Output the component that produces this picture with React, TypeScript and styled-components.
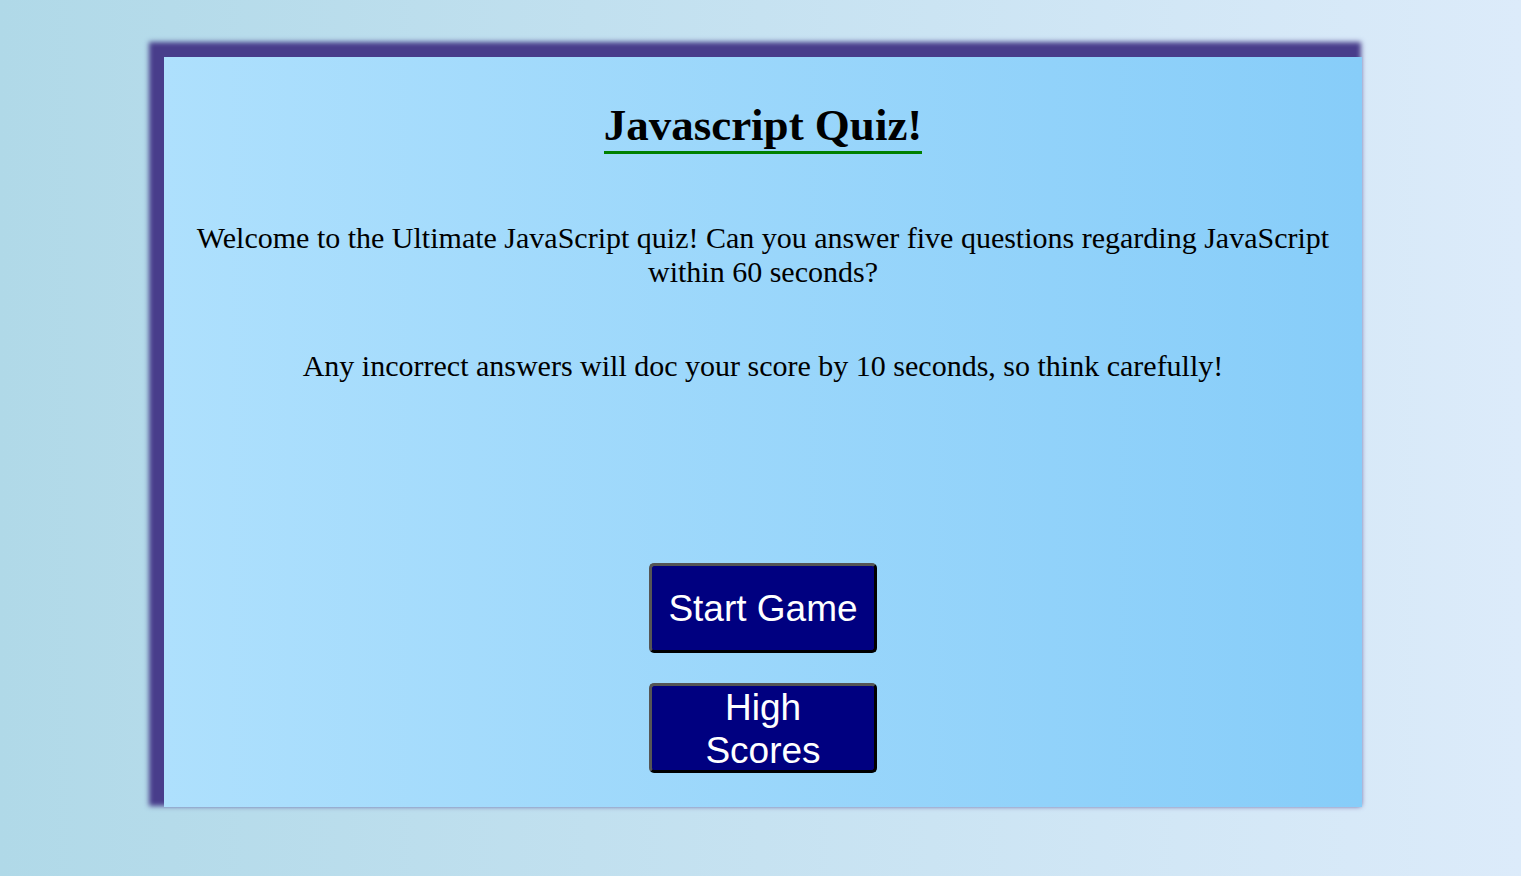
import styled, { createGlobalStyle } from 'styled-components';

const GlobalStyle = createGlobalStyle`
	html, body {
		margin: 0;
		padding: 0;
	}
	body {
		font-family: 'Liberation Serif', 'Times New Roman', serif;
	}
`;

const App = () => {
	return (
		<Page>
			<GlobalStyle />
			<Card>
				<Title>
					<TitleText>Javascript Quiz!</TitleText>
				</Title>
				<Intro>
					Welcome to the Ultimate JavaScript quiz! Can you answer five questions regarding JavaScript within 60
					seconds?
				</Intro>
				<Warning>Any incorrect answers will doc your score by 10 seconds, so think carefully!</Warning>
				<Buttons>
					<QuizButton>Start Game</QuizButton>
					<QuizButton>High Scores</QuizButton>
				</Buttons>
			</Card>
		</Page>
	);
};

export default App;

const Page = styled.div`
	min-height: 876px;
	box-sizing: border-box;
	padding: 57px 0 0 164px;
	background: linear-gradient(to right, #b0d9e8, #dcebfa);
	overflow: hidden;
`;

const Card = styled.div`
	width: 1198px;
	height: 750px;
	box-sizing: border-box;
	padding: 42px 30px 0;
	display: flex;
	flex-direction: column;
	align-items: center;
	background: linear-gradient(to right, #aee0fd, #87cdf9);
	box-shadow: -8px -8px 5px 7px #483d8b;
`;

const Title = styled.h1`
	margin: 0;
	font-size: 45px;
	font-weight: bold;
	line-height: normal;
	text-align: center;
`;

const TitleText = styled.span`
	display: inline-block;
	border-bottom: 3px solid #008000;
	color: #000;
`;

const Text = styled.p`
	margin: 0;
	font-size: 30px;
	line-height: 34px;
	text-align: center;
	color: #000;
`;

const Intro = styled(Text)`
	margin-top: 67px;
`;

const Warning = styled(Text)`
	margin-top: 60px;
`;

const Buttons = styled.div`
	margin-top: 180px;
	display: flex;
	flex-direction: column;
	align-items: center;
	gap: 30px;
`;

const QuizButton = styled.button`
	width: 228px;
	height: 90px;
	padding: 0 15px;
	box-sizing: border-box;
	background: #000080;
	color: #fff;
	font-family: 'Liberation Sans', Arial, sans-serif;
	font-size: 37px;
	line-height: 43px;
	border: 3px solid;
	border-color: #555 #000 #000 #555;
	border-radius: 5px;
	cursor: pointer;
`;
